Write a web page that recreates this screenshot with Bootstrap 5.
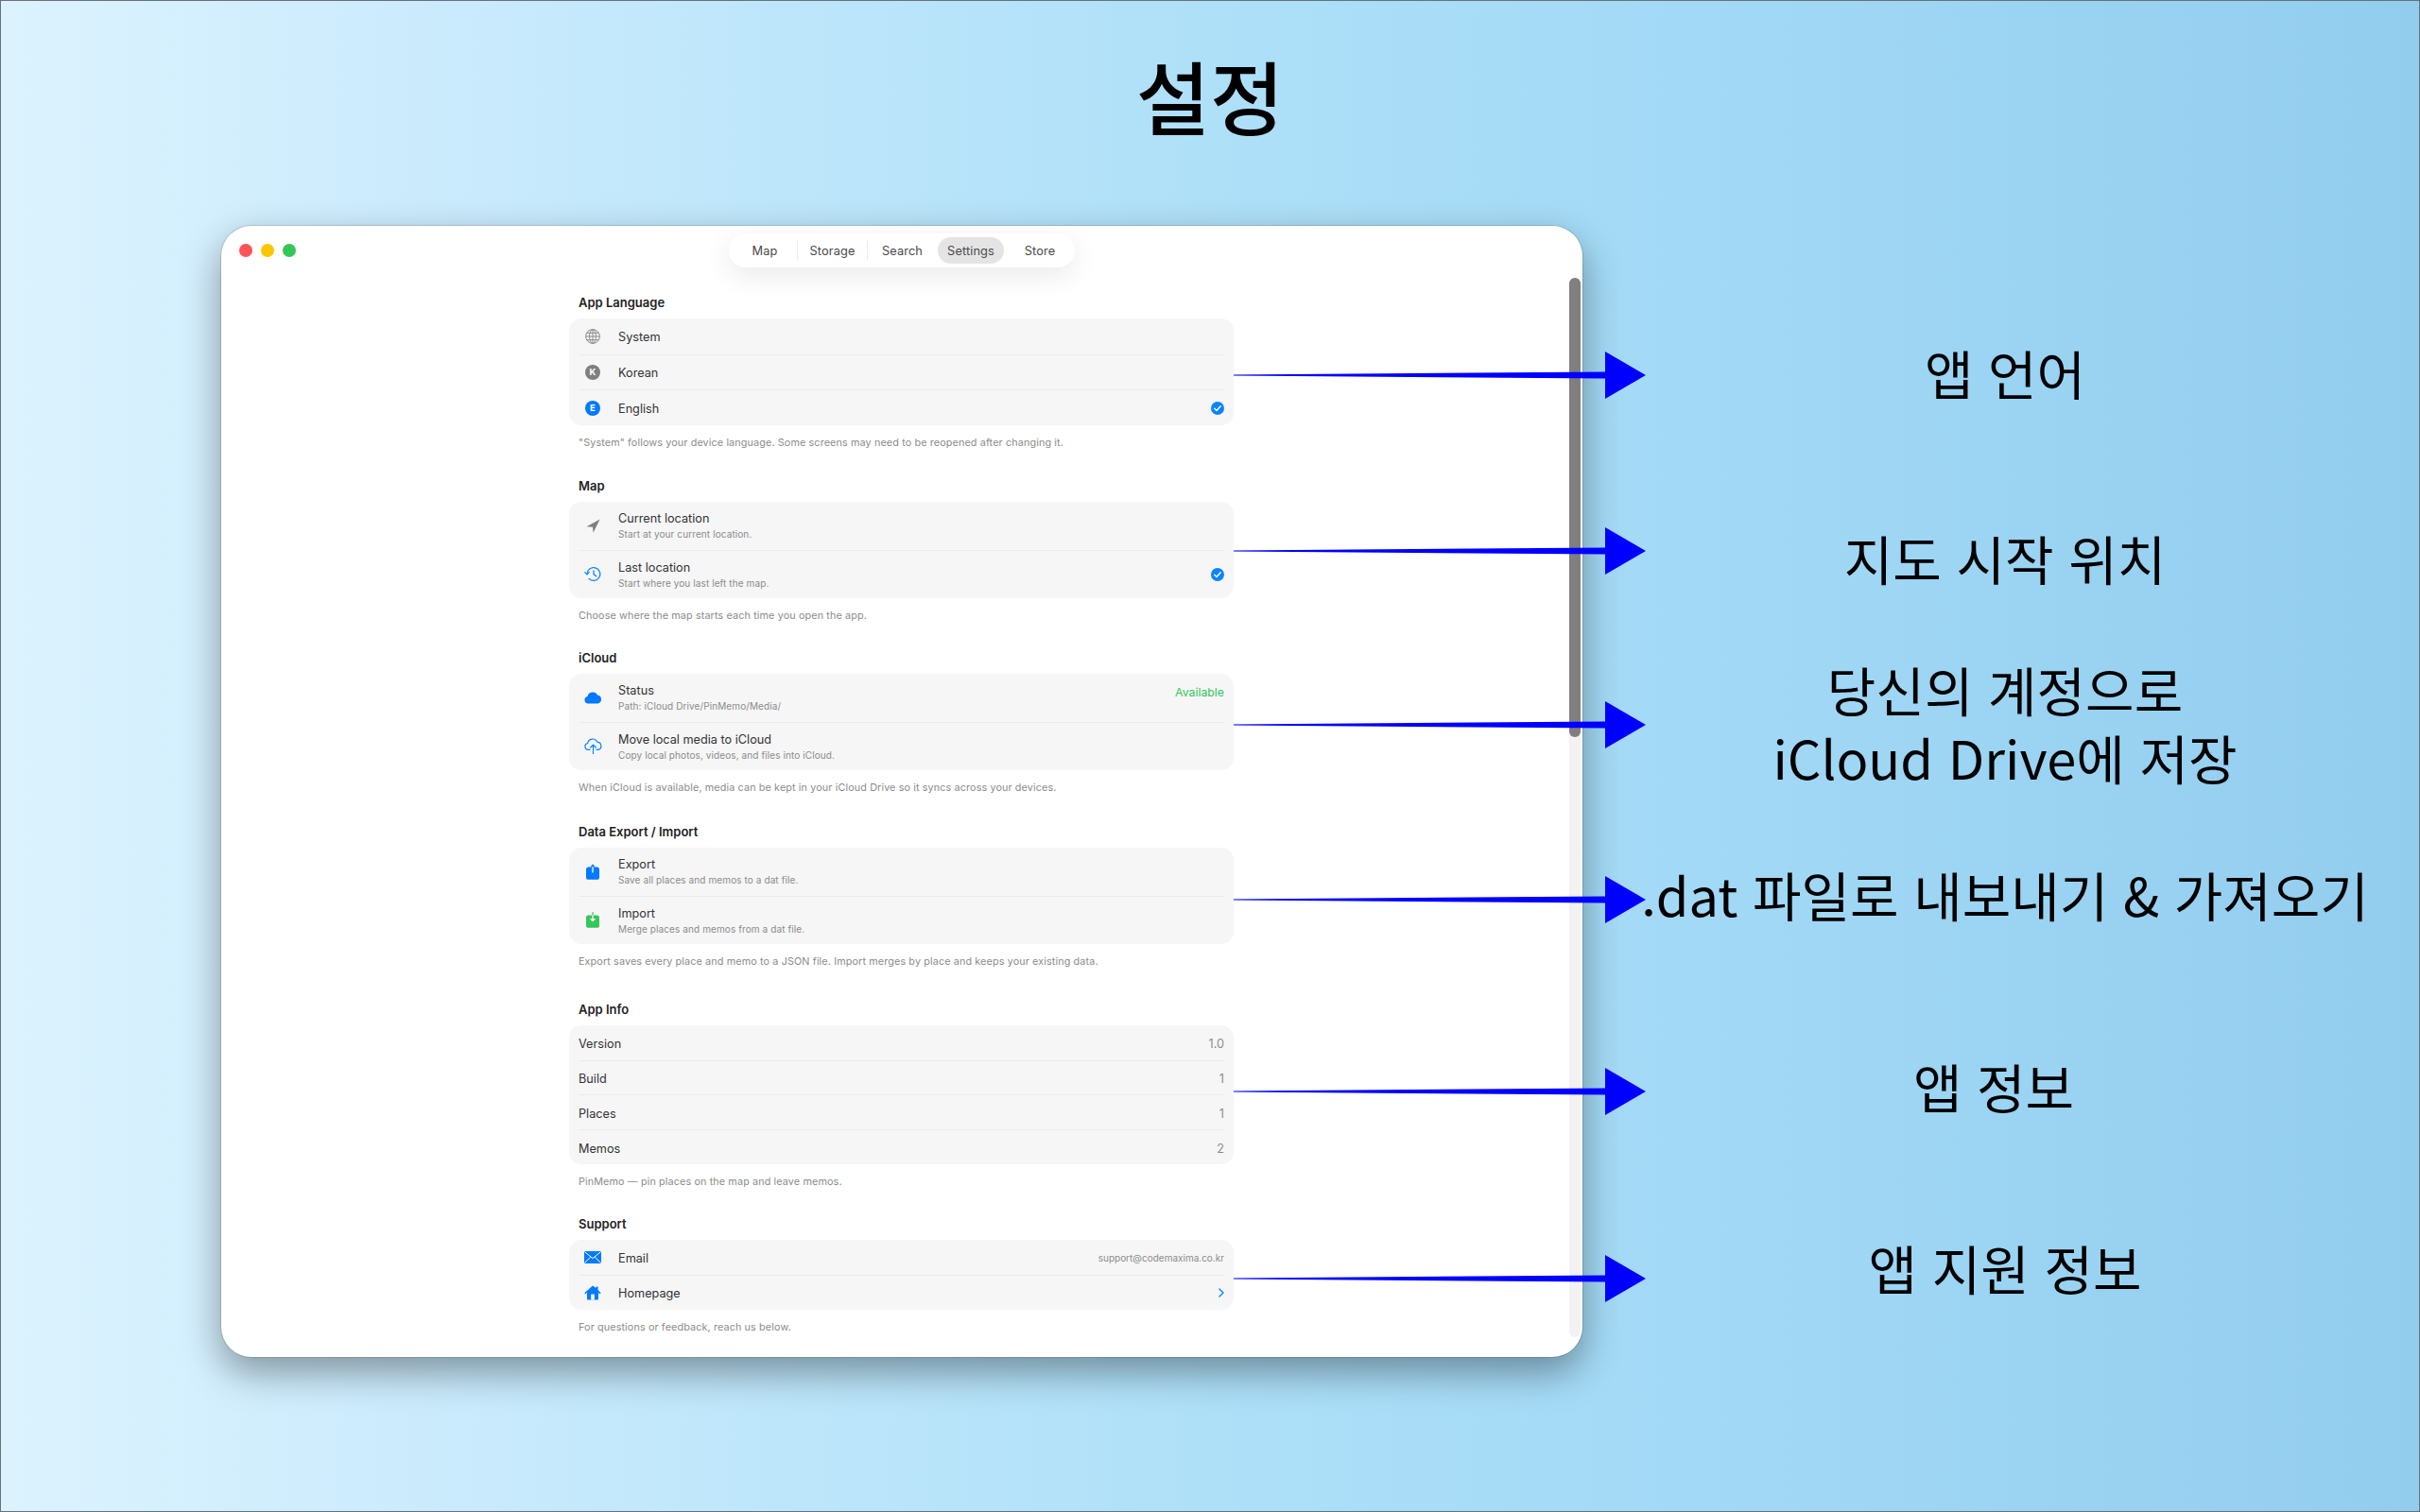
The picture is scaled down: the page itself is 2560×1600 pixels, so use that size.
<!doctype html>
<html lang="ko">
<head>
<meta charset="utf-8">
<title>설정</title>
<link href="https://cdn.jsdelivr.net/npm/bootstrap@5.3.0/dist/css/bootstrap.min.css" rel="stylesheet">
<style>
html,body{margin:0;background:#a0d7f5}
.stage{position:relative;width:2560px;height:1600px;overflow:hidden;border:1px solid #66727a;
  background:linear-gradient(90deg,#dcf3fe 0%,#cdecfd 15%,#aee0f8 50%,#a2d9f6 70%,#93cdee 100%);
  font-family:"Noto Sans CJK KR","Noto Sans",sans-serif;color:#000}
.page-title{height:238px;padding-top:56px;margin:0;font-size:85px;line-height:1;font-weight:500;text-align:center;font-family:"Noto Sans CJK KR",sans-serif}
.app-window{position:relative;margin-left:233px;width:1440px;height:1197px;background:#fff;border-radius:32px;
  box-shadow:0 16px 40px rgba(0,0,0,.38),0 0 0 1px rgba(0,0,0,.12);font-family:Inter,"Liberation Sans",sans-serif;overflow:hidden}
.topbar{display:grid;grid-template-columns:1fr auto 1fr;align-items:center;padding-top:8px;height:62px;align-content:start}
.lights{padding-left:19px;gap:9px}
.light{width:14px;height:14px;border-radius:50%}
.l-red{background:#ff5257}.l-yel{background:#fbc800}.l-grn{background:#33c758}
.segbar{height:36px;padding:4px;background:#fff;border-radius:18px;box-shadow:0 8px 30px rgba(0,0,0,.09)}
.segbar .nav-link{height:28px;padding:0;font-size:12.8px;line-height:29px;text-align:center;color:#4a4a4a;border-radius:14px;letter-spacing:.1px}
.segbar .nav-link.active{background:#e4e4e4;color:#4a4a4a}
.seg-map{width:68px}.seg-sto{width:73px}.seg-sea{width:73px}.seg-set{width:70px}
.segbar .seg-str{width:70px;padding-left:4px}
.segsep{width:1px;height:20px;align-self:center;background:#ececec}
.content{width:703px;margin-left:368px}
.sec-head{height:36px;margin:0 0 0 10px;font-size:13px;line-height:38px;font-weight:600;color:#222}
.sec-foot{height:36px;margin:0 0 9px 10px;font-size:10.8px;line-height:37px;color:#8b8b8b;letter-spacing:.12px}
.foot-map{margin-bottom:8px}
.foot-cloud{margin-bottom:10px}
.foot-wide{margin-bottom:14px}
.foot-info{margin-bottom:8px}
.setlist{background:#f6f6f6;border-radius:13px}
.setlist .list-group-item{display:flex;align-items:center;margin:0 10px;padding:0;background:transparent;border:0;color:#333;font-size:12.7px}
.setlist .list-group-item + .list-group-item{border-top:1px solid #ebebeb}
.setlist .list-group-item > span:not(.ico){padding-top:2px}
.r-one{height:37.67px}.r-two{height:51px}.r-info{height:36.75px}.r-sup{height:37px}
.ico{width:30px;flex:0 0 30px;margin-right:12px}
.ico svg{display:block}
.t1{line-height:16px}
.t2{font-size:10px;line-height:16px;color:#8b8b8b;letter-spacing:.1px}
.val{color:#8b8b8b;font-size:12.7px}
.setlist .val-mail{font-size:10px}
.setlist .list-group-item > .val-ok{color:#34c759;font-size:12.3px;line-height:16px;align-self:flex-start;margin-top:10px}
.letter{width:16px;height:16px;border-radius:50%;color:#fff;font-size:9.5px;font-weight:700;line-height:16px;text-align:center}
.lt-k{background:#7f7f7f}.lt-e{background:#007aff}
.scroll-track{position:absolute;top:55px;bottom:21px;right:2px;width:12px;border-radius:6px;background:#f2f2f2}
.scroll-thumb{height:486px;border-radius:6px;background:#7f7f7f}
.overlay{position:absolute;left:-1px;top:-1px;pointer-events:none}
.note{position:absolute;transform:translate(-50%,-50%);white-space:nowrap;text-align:center;font-size:56px;line-height:72px;color:#000;font-family:"Noto Sans CJK KR",sans-serif}
</style>
</head>
<body>
<div class="stage">
  <h1 class="page-title">설정</h1>

  <div class="app-window">
    <div class="topbar">
      <div class="lights d-flex"><span class="light l-red"></span><span class="light l-yel"></span><span class="light l-grn"></span></div>
      <ul class="nav segbar flex-nowrap">
        <li class="nav-item"><a class="nav-link seg-map" href="#">Map</a></li>
        <li class="segsep"></li>
        <li class="nav-item"><a class="nav-link seg-sto" href="#">Storage</a></li>
        <li class="segsep"></li>
        <li class="nav-item"><a class="nav-link seg-sea" href="#">Search</a></li>
        <li class="segsep invisible"></li>
        <li class="nav-item"><a class="nav-link seg-set active" href="#">Settings</a></li>
        <li class="segsep invisible"></li>
        <li class="nav-item"><a class="nav-link seg-str" href="#">Store</a></li>
      </ul>
      <div></div>
    </div>

    <div class="content">
      <h6 class="sec-head">App Language</h6>
      <div class="list-group setlist">
        <div class="list-group-item r-one"><span class="ico d-flex justify-content-center">
          <svg width="16" height="16" viewBox="0 0 16 16" fill="none" stroke="#8c8c8c" stroke-width="1"><circle cx="8" cy="8" r="7.4"/><ellipse cx="8" cy="8" rx="3.4" ry="7.4"/><path d="M8 .6v14.8M.6 8h14.8M1.6 4.3h12.8M1.6 11.7h12.8"/></svg>
        </span><span>System</span></div>
        <div class="list-group-item r-one"><span class="ico d-flex justify-content-center"><span class="letter lt-k">K</span></span><span>Korean</span></div>
        <div class="list-group-item r-one"><span class="ico d-flex justify-content-center"><span class="letter lt-e">E</span></span><span>English</span>
          <svg class="ms-auto" width="14" height="14" viewBox="0 0 14 14"><circle cx="7" cy="7" r="7" fill="#0a84ff"/><path d="M3.8 7.2l2.2 2.3 4.2-4.8" fill="none" stroke="#fff" stroke-width="1.4" stroke-linecap="round" stroke-linejoin="round"/></svg>
        </div>
      </div>
      <p class="sec-foot">"System" follows your device language. Some screens may need to be reopened after changing it.</p>

      <h6 class="sec-head">Map</h6>
      <div class="list-group setlist">
        <div class="list-group-item r-two"><span class="ico d-flex justify-content-center">
          <svg width="15" height="15" viewBox="0 0 15 15"><path d="M14.6.4 .6 8.2l6.4.6.6 6z" fill="#7f7f7f"/></svg>
        </span><span><div class="t1">Current location</div><div class="t2">Start at your current location.</div></span></div>
        <div class="list-group-item r-two"><span class="ico d-flex justify-content-center">
          <svg width="18" height="17" viewBox="0 0 18 17" fill="none" stroke="#0a84ff" stroke-width="1.3" stroke-linecap="round" stroke-linejoin="round"><path d="M3 8.5a6.9 6.9 0 1 1 2 4.9"/><path d="M.8 6.6 3 8.9l2.2-2.3"/><path d="M10 4.8v4l2.6 1.8"/></svg>
        </span><span><div class="t1">Last location</div><div class="t2">Start where you last left the map.</div></span>
          <svg class="ms-auto" width="14" height="14" viewBox="0 0 14 14"><circle cx="7" cy="7" r="7" fill="#0a84ff"/><path d="M3.8 7.2l2.2 2.3 4.2-4.8" fill="none" stroke="#fff" stroke-width="1.4" stroke-linecap="round" stroke-linejoin="round"/></svg>
        </div>
      </div>
      <p class="sec-foot foot-map">Choose where the map starts each time you open the app.</p>

      <h6 class="sec-head">iCloud</h6>
      <div class="list-group setlist">
        <div class="list-group-item r-two"><span class="ico d-flex justify-content-center">
          <svg width="19" height="14" viewBox="0 0 19 14"><path d="M4.2 13.6a3.9 3.9 0 0 1-.7-7.700A5.600 5.600 0 0 1 14 4.600a4.600 4.600 0 0 1 .6 9z" fill="#007aff"/></svg>
        </span><span><div class="t1">Status</div><div class="t2">Path: iCloud Drive/PinMemo/Media/</div></span><span class="val-ok ms-auto">Available</span></div>
        <div class="list-group-item r-two"><span class="ico d-flex justify-content-center">
          <svg width="19" height="17" viewBox="0 0 19 17" fill="none" stroke="#0a84ff" stroke-width="1.2" stroke-linecap="round" stroke-linejoin="round"><path d="M6 12.4H4.2a3.5 3.5 0 0 1-.6-6.900 5.400 5.400 0 0 1 10.300-1.200 4.100 4.100 0 0 1 .8 8.100H13"/><path d="M9.500 16.400V7.400M6.600 10l2.900-2.800 2.900 2.800"/></svg>
        </span><span><div class="t1">Move local media to iCloud</div><div class="t2">Copy local photos, videos, and files into iCloud.</div></span></div>
      </div>
      <p class="sec-foot foot-cloud">When iCloud is available, media can be kept in your iCloud Drive so it syncs across your devices.</p>

      <h6 class="sec-head">Data Export / Import</h6>
      <div class="list-group setlist">
        <div class="list-group-item r-two"><span class="ico d-flex justify-content-center">
          <svg width="14" height="17" viewBox="0 0 14 17"><rect y="3.600" width="14" height="13.200" rx="2.600" fill="#007aff"/><path d="M7 .2 4.400 3.600h5.200z" fill="#007aff"/><path d="M7 3.400v6" stroke="#fff" stroke-width="1.300" fill="none"/></svg>
        </span><span><div class="t1">Export</div><div class="t2">Save all places and memos to a dat file.</div></span></div>
        <div class="list-group-item r-two"><span class="ico d-flex justify-content-center">
          <svg width="14" height="17" viewBox="0 0 14 17"><rect y="3.600" width="14" height="13.200" rx="2.600" fill="#34c759"/><path d="M7 .2v3.400" stroke="#34c759" stroke-width="1.300"/><path d="M7 3.600v5" stroke="#fff" stroke-width="1.300"/><path d="M3.800 7.200H10.200L7 10.600z" fill="#fff"/></svg>
        </span><span><div class="t1">Import</div><div class="t2">Merge places and memos from a dat file.</div></span></div>
      </div>
      <p class="sec-foot foot-wide">Export saves every place and memo to a JSON file. Import merges by place and keeps your existing data.</p>

      <h6 class="sec-head">App Info</h6>
      <div class="list-group setlist">
        <div class="list-group-item r-info justify-content-between"><span>Version</span><span class="val">1.0</span></div>
        <div class="list-group-item r-info justify-content-between"><span>Build</span><span class="val">1</span></div>
        <div class="list-group-item r-info justify-content-between"><span>Places</span><span class="val">1</span></div>
        <div class="list-group-item r-info justify-content-between"><span>Memos</span><span class="val">2</span></div>
      </div>
      <p class="sec-foot foot-info">PinMemo — pin places on the map and leave memos.</p>

      <h6 class="sec-head">Support</h6>
      <div class="list-group setlist">
        <div class="list-group-item r-sup"><span class="ico d-flex justify-content-center">
          <svg width="18" height="13" viewBox="0 0 18 13"><rect width="18" height="13" rx="1.400" fill="#007aff"/><path d="M.6.8 9 7.600 17.400.8M.6 12.200l6-6M17.400 12.200l-6-6" fill="none" stroke="#fff" stroke-width="1"/></svg>
        </span><span>Email</span><span class="val val-mail ms-auto">support@codemaxima.co.kr</span></div>
        <div class="list-group-item r-sup"><span class="ico d-flex justify-content-center">
          <svg width="18" height="16" viewBox="0 0 18 16"><path d="M9 .4.3 8.200l1 1.100L3 7.800v6.400c0 .9.6 1.400 1.400 1.400h9.200c.8 0 1.400-.5 1.400-1.400V7.800l1.700 1.500 1-1.100L14.600 4.900V1.400h-2v1.700z" fill="#007aff"/><rect x="7.200" y="9.600" width="3.600" height="6" fill="#fff"/></svg>
        </span><span>Homepage</span>
          <svg class="ms-auto" width="6" height="10" viewBox="0 0 6 10"><path d="M1 1l4 4-4 4" fill="none" stroke="#0a84ff" stroke-width="1.400" stroke-linecap="round" stroke-linejoin="round"/></svg>
        </div>
      </div>
      <p class="sec-foot">For questions or feedback, reach us below.</p>
    </div>

    <div class="scroll-track"><div class="scroll-thumb"></div></div>
  </div>

  <svg class="overlay" width="2560" height="1600" viewBox="0 0 2560 1600" fill="#0000ff">
    <path d="M1305 396.400 1698 393.500V372L1741 397 1698 422V400.500L1305 397.600z"/>
    <path d="M1305 582.400 1698 579.500V558L1741 583 1698 608V586.500L1305 583.600z"/>
    <path d="M1305 766.400 1698 763.500V742L1741 767 1698 792V770.500L1305 767.600z"/>
    <path d="M1305 951.400 1698 948.500V927L1741 952 1698 977V955.500L1305 952.600z"/>
    <path d="M1305 1154.400 1698 1151.500V1130L1741 1155 1698 1180V1158.500L1305 1155.600z"/>
    <path d="M1305 1352.400 1698 1349.500V1328L1741 1353 1698 1378V1356.500L1305 1353.600z"/>
  </svg>

  <div class="note" style="left:2120px;top:393px">앱 언어</div>
  <div class="note" style="left:2120px;top:589px">지도 시작 위치</div>
  <div class="note" style="left:2120px;top:764px">당신의 계정으로<br>iCloud Drive에 저장</div>
  <div class="note" style="left:2120px;top:945px">.dat 파일로 내보내기 &amp; 가져오기</div>
  <div class="note" style="left:2108px;top:1148px">앱 정보</div>
  <div class="note" style="left:2120px;top:1340px">앱 지원 정보</div>
</div>
<script src="https://cdn.jsdelivr.net/npm/bootstrap@5.3.0/dist/js/bootstrap.bundle.min.js"></script>
</body>
</html>
